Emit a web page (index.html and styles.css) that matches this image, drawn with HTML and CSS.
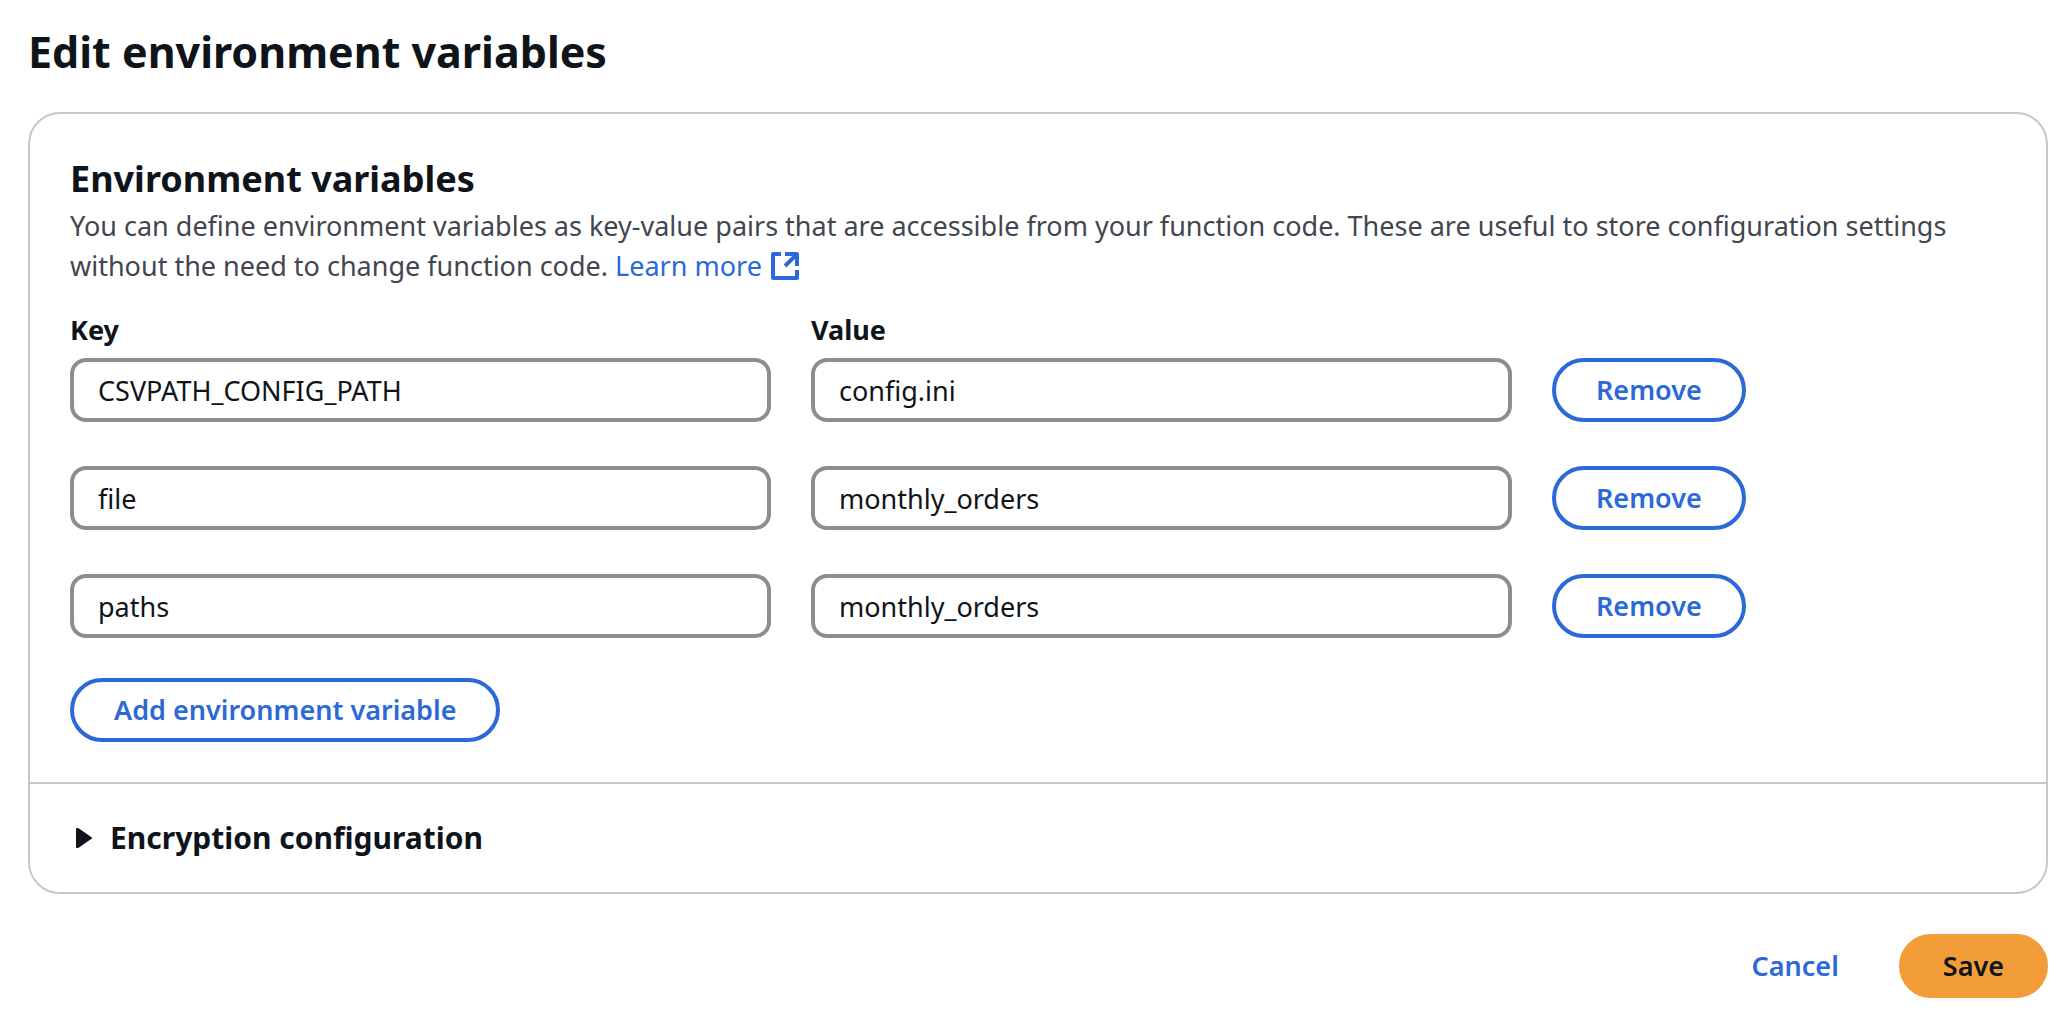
FILE: index.html
```
<!DOCTYPE html>
<html lang="en">
<head>
  <meta charset="utf-8">
  <meta name="viewport" content="width=device-width, initial-scale=1">
  <title>Edit environment variables</title>
  <link rel="stylesheet" href="styles.css">
</head>
<body>
  <main class="page">
    <h1 class="page-title">Edit environment variables</h1>
    <form class="form">
      <div class="card">
        <section class="card-section">
          <h2 class="card-title">Environment variables</h2>
          <p class="card-description">You can define environment variables as key-value pairs that are accessible from your function code. These are useful to store configuration settings without the need to change function code. <a class="link" href="#">Learn more<svg class="link-icon" viewBox="0 0 28 28" aria-hidden="true"><path d="M10 2H2v24h24v-8M14 2h12v12M26 2 14 14"/></svg></a></p>
          <div class="variables">
            <div class="row">
              <div class="field">
                <label class="label" for="key-1">Key</label>
                <input class="input" id="key-1" type="text" value="CSVPATH_CONFIG_PATH">
              </div>
              <div class="field">
                <label class="label" for="value-1">Value</label>
                <input class="input" id="value-1" type="text" value="config.ini">
              </div>
              <div class="action"><button class="button" type="button">Remove</button></div>
            </div>
            <div class="row">
              <div class="field"><input class="input" type="text" aria-label="Key" value="file"></div>
              <div class="field"><input class="input" type="text" aria-label="Value" value="monthly_orders"></div>
              <div class="action"><button class="button" type="button">Remove</button></div>
            </div>
            <div class="row">
              <div class="field"><input class="input" type="text" aria-label="Key" value="paths"></div>
              <div class="field"><input class="input" type="text" aria-label="Value" value="monthly_orders"></div>
              <div class="action"><button class="button" type="button">Remove</button></div>
            </div>
          </div>
          <button class="button" type="button">Add environment variable</button>
        </section>
        <details class="expander">
          <summary class="expander-header">
            <svg class="caret" viewBox="0 0 16 20" aria-hidden="true"><path d="M1 1v18h1L15 10 2 1Z"/></svg>
            Encryption configuration
          </summary>
        </details>
      </div>
      <div class="form-actions">
        <button class="button button-link" type="button">Cancel</button>
        <button class="button button-primary" type="submit">Save</button>
      </div>
    </form>
  </main>
</body>
</html>
```
FILE: styles.css
```
* {
  box-sizing: border-box;
}

body {
  margin: 0;
  background: #fff;
  color: #0f141a;
  font: 400 27px/40px "Noto Sans", "Open Sans", sans-serif;
}

.page {
  padding: 22px 14px 12px 28px;
}

.page-title {
  margin: 0 0 30px;
  font-size: 43px;
  font-weight: 700;
  line-height: 60px;
}

.card {
  border: 2px solid #c6c6cd;
  border-radius: 32px;
}

.card-section {
  padding: 40px;
}

.card-title {
  margin: 0 0 2px;
  font-size: 36px;
  font-weight: 700;
  line-height: 50px;
}

.card-description {
  margin: 0 0 24px;
  color: #424650;
}

.link {
  color: #2b69d9;
  text-decoration: none;
  white-space: nowrap;
}

.link-icon {
  width: 28px;
  height: 28px;
  margin-left: 9px;
  vertical-align: -4px;
  fill: none;
  stroke: currentColor;
  stroke-width: 4;
  stroke-linejoin: round;
}

.variables {
  display: grid;
  gap: 44px;
  margin-bottom: 40px;
}

.row {
  display: grid;
  grid-template-columns: repeat(8, minmax(0, 1fr));
  column-gap: 40px;
  align-items: end;
}

.field {
  display: flex;
  flex-direction: column;
  gap: 8px;
  grid-column: span 3;
}

.action {
  display: flex;
  grid-column: span 2;
}

.label {
  font-weight: 700;
}

.input {
  width: 100%;
  height: 64px;
  padding: 0 24px;
  border: 4px solid #8c8c94;
  border-radius: 16px;
  background: #fff;
  color: inherit;
  font: inherit;
}

.button {
  display: block;
  height: 64px;
  padding: 0 40px;
  border: 4px solid #2b69d9;
  border-radius: 32px;
  background: #fff;
  color: #2b69d9;
  font: inherit;
  font-weight: 600;
  cursor: pointer;
}

.button-link {
  border-color: transparent;
  background: transparent;
}

.button-primary {
  border-color: #f29d38;
  background: #f29d38;
  color: #0f141a;
}

.expander {
  border-top: 2px solid #c6c6cd;
}

.expander-header {
  display: flex;
  align-items: center;
  gap: 18px;
  padding: 34px 46px;
  font-size: 30px;
  font-weight: 700;
  list-style: none;
  cursor: pointer;
}

.caret {
  width: 16px;
  height: 20px;
  fill: currentColor;
  stroke: currentColor;
  stroke-width: 2;
  stroke-linejoin: round;
}

.form-actions {
  display: flex;
  justify-content: flex-end;
  gap: 16px;
  margin-top: 40px;
}
```
